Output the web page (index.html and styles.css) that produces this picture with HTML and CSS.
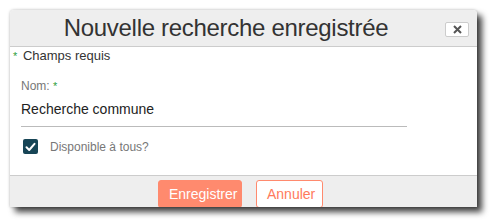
FILE: index.html
```html
<!DOCTYPE html>
<html lang="fr">
<head>
	<meta charset="UTF-8">
	<title>Nouvelle recherche</title>
	<link rel="stylesheet" href="styles.css">
</head>
<body>
	<div class="dialog">
		<div class="dialog-header">
			<h1>Nouvelle recherche enregistrée</h1>
			<button class="close">
				<svg width="9" height="9" viewBox="0 0 9 9"><path d="M1 1 L8 8 M8 1 L1 8" stroke="#555555" stroke-width="2"/></svg>
			</button>
		</div>
		<div class="dialog-body">
			<p class="required"><span class="star">*</span> Champs requis</p>
			<label class="field-label">Nom: <span class="star">*</span></label>
			<div class="field-input">Recherche commune</div>
			<div class="check-row">
				<span class="checkbox">
					<svg width="11" height="10" viewBox="0 0 11 10"><path d="M1.5 5.3 L4.2 8 L9.5 1.8" fill="none" stroke="white" stroke-width="2" stroke-linecap="round" stroke-linejoin="round"/></svg>
				</span>
				<span class="check-label">Disponible à tous?</span>
			</div>
		</div>
		<div class="dialog-footer">
			<button class="btn btn-primary">Enregistrer</button>
			<button class="btn btn-outline">Annuler</button>
		</div>
	</div>
</body>
</html>
```

FILE: styles.css
```css
* {
	box-sizing: border-box;
}
body {
	margin: 0;
	background-color: white;
	font-family: "Liberation Sans", Arial, sans-serif;
	padding: 10px 0 0 10px;
	height: 224px;
}

.dialog {
	width: 467px;
	height: 197px;
	background-color: white;
	border-radius: 4px 4px 0 0;
	box-shadow: 5px 5px 6px rgba(0, 0, 0, 0.75), 0 0 3px rgba(0, 0, 0, 0.25);
	display: flex;
	flex-direction: column;
	overflow: hidden;
}

.dialog-header {
	height: 37px;
	background-color: #eeeeee;
	border-bottom: 1px solid #cccccc;
	display: flex;
	align-items: center;
	padding-right: 8px;
}
.dialog-header h1 {
	flex: 1;
	margin: 0;
	text-align: center;
	font-weight: normal;
	font-size: 24px;
	letter-spacing: -0.3px;
	color: #333333;
	padding-right: 3px;
}
.close {
	width: 24px;
	height: 15px;
	padding: 0;
	border: 1px solid #cccccc;
	border-radius: 2px;
	background-color: white;
	display: flex;
	align-items: center;
	justify-content: center;
	margin-top: 2px;
}

.dialog-body {
	flex: 1;
	padding: 0 0 0 3px;
	border-bottom: 1px solid #cccccc;
}
.star {
	color: #2e9e3e;
	font-size: 11px;
	margin-right: 2px;
}
.required {
	margin: 0;
	font-size: 13px;
	color: #333333;
	line-height: 16px;
	padding-top: 1px;
}
.field-label {
	display: block;
	margin: 15px 0 0 8px;
	font-size: 12px;
	color: #777777;
	line-height: 14px;
}
.field-label .star {
	margin-right: 0;
}
.field-input {
	margin: 6px 0 0 8px;
	width: 386px;
	font-size: 14px;
	color: #222222;
	line-height: 20px;
	padding-bottom: 7px;
	border-bottom: 1px solid #bbbbbb;
}
.check-row {
	display: flex;
	align-items: center;
	margin: 12px 0 0 10px;
}
.checkbox {
	width: 15px;
	height: 15px;
	border-radius: 2px;
	background-color: #174556;
	display: flex;
	align-items: center;
	justify-content: center;
}
.check-label {
	margin-left: 12px;
	font-size: 12px;
	color: #777777;
}

.dialog-footer {
	height: 31px;
	background-color: #eeeeee;
	display: flex;
	justify-content: center;
	align-items: flex-start;
	gap: 14px;
	padding: 4px 6px 0 0;
}
.btn {
	height: 28px;
	font-family: "Liberation Sans", Arial, sans-serif;
	font-size: 14px;
	border-radius: 3px;
	padding: 0 10px;
}
.btn-primary {
	width: 84px;
	background-color: #ff8a6e;
	border: 1px solid #ff8a6e;
	color: white;
}
.btn-outline {
	width: 67px;
	background-color: white;
	border: 1px solid #ff8a6e;
	color: #ff7a5c;
}
```
